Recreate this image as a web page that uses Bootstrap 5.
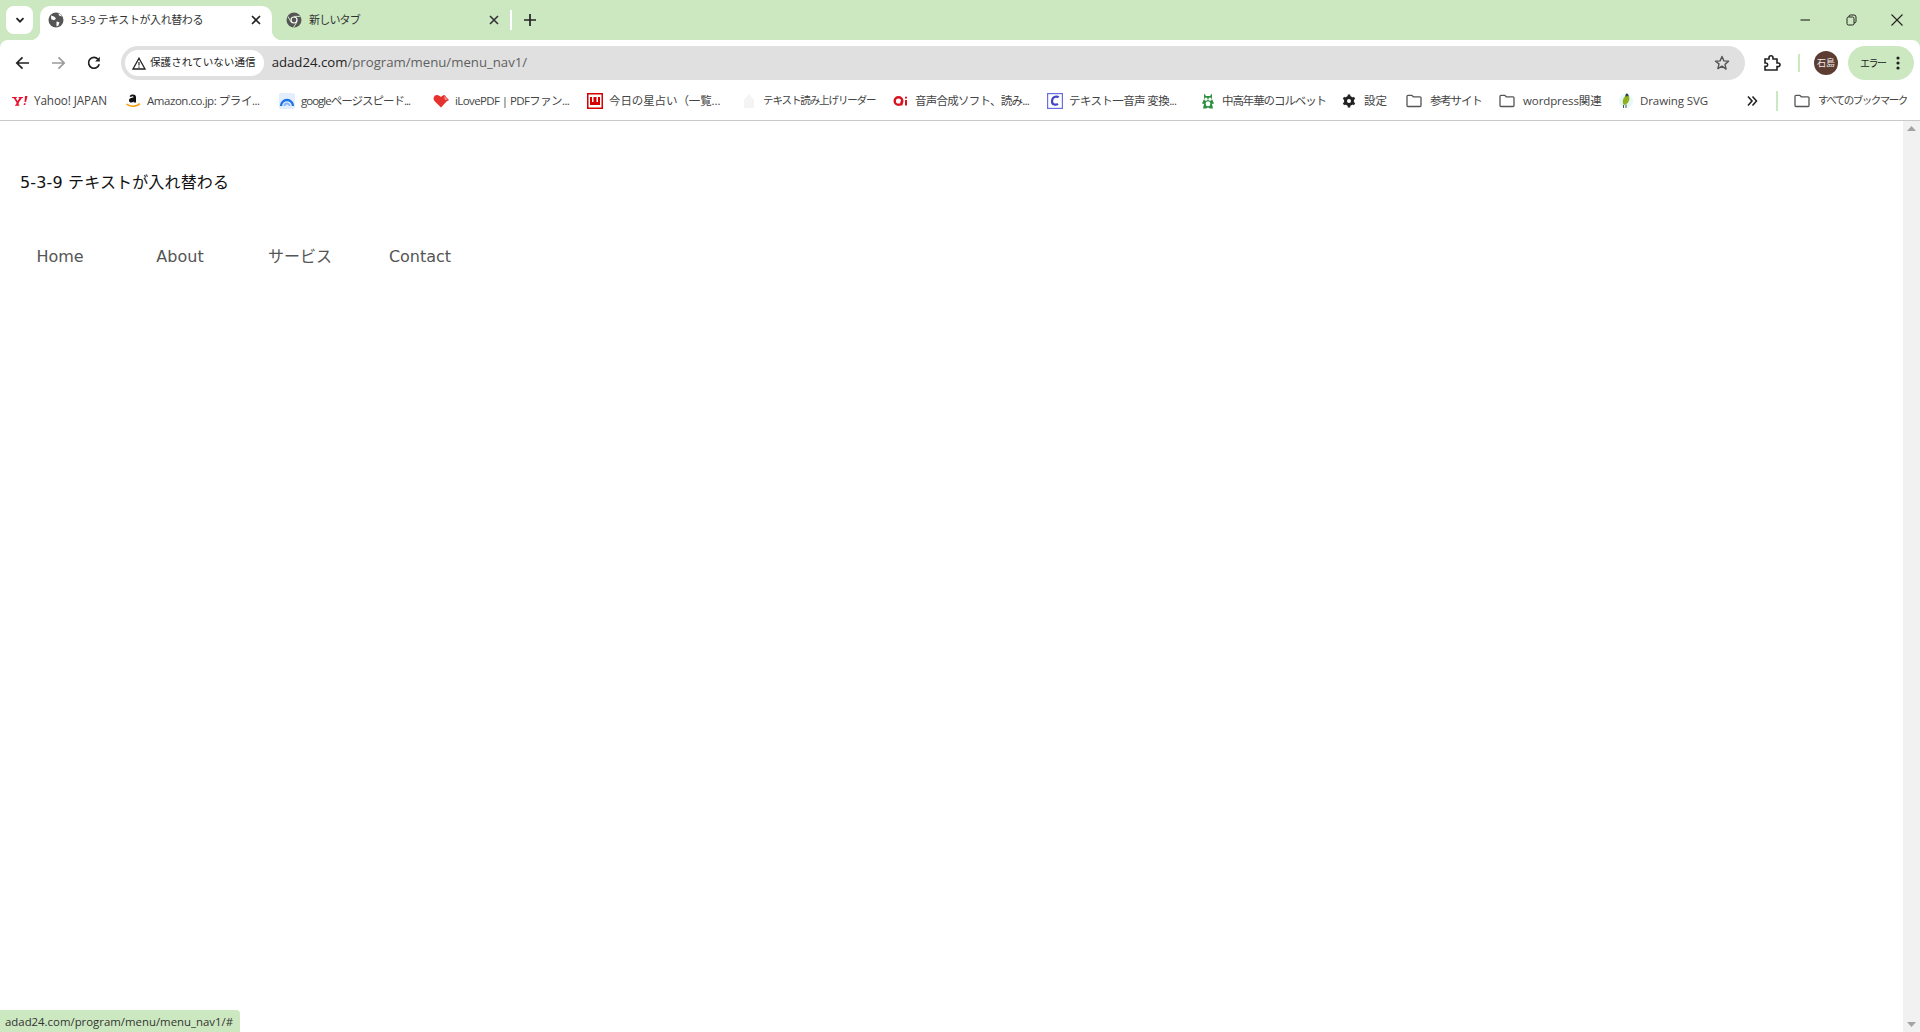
<!DOCTYPE html>
<html lang="ja">
<head>
<meta charset="utf-8">
<title>5-3-9 テキストが入れ替わる</title>
<link href="https://cdn.jsdelivr.net/npm/bootstrap@5.3.0/dist/css/bootstrap.min.css" rel="stylesheet">
<style>
:root{--chrome-green:#cce8c0;}
html,body{height:100%;overflow:hidden;}
body{font-family:"Open Sans","Noto Sans CJK JP",sans-serif;background:#fff;color:#222;}
svg{display:block;flex:none;}
.shell{height:1032px;}
.tabstrip{height:40px;background:var(--chrome-green);flex:none;}
.tab-menu{width:27px;height:28px;margin:6px 7px 0 6px;background:#fff;border-radius:8px;}
.tab-cell{height:34px;margin-top:6px;padding-bottom:6px!important;font-size:11px;color:#333;letter-spacing:-.8px;}
.tab-live{width:232px;background:#fff;border-radius:10px 10px 0 0;padding:0 10px 0 8px;position:relative;letter-spacing:-.4px;}
.tab-live::before,.tab-live::after{content:"";position:absolute;bottom:0;width:10px;height:10px;}
.tab-live::before{left:-10px;background:radial-gradient(circle at 0 0,transparent 10px,#fff 10.5px);}
.tab-live::after{right:-10px;background:radial-gradient(circle at 100% 0,transparent 10px,#fff 10.5px);}
.tab-idle{width:232px;padding:0 4px 0 14px;}
.tab-name{margin-left:7px;flex:1;white-space:nowrap;}
.tab-sep{width:2px;height:20px;background:#fff;margin:10px 0 0 6px;}
.tab-add{margin:13px 0 0 11px;}
.winbtns{margin-left:auto;gap:32px;padding:0 16px 0 0;height:40px;}
.toolbar{height:40px;flex:none;background:#fff;border-radius:8px 8px 0 0;padding:6px 0 0 15px;position:relative;}
.toolbar::before{content:"";position:absolute;inset:0 0 auto 0;height:8px;background:var(--chrome-green);z-index:0;}
.toolbar::after{content:"";position:absolute;inset:0;background:#fff;border-radius:8px 8px 0 0;z-index:0;}
.toolbar>*{position:relative;z-index:1;}
.nav-btns{gap:21px;width:106px;}
.omni{width:1624px;height:34px;background:#e0e0e0;border-radius:17px;padding:0 9px 0 4px;font-size:13.2px;}
.secure{height:26px;background:#fff;border-radius:13px;padding:0 8px 0 7px;font-size:10.6px;color:#222;gap:4px;}
.omni-url{margin-left:8px;color:#5f5f5f;}
.omni-url b{font-weight:400;color:#222;}
.omni-star{margin-left:auto;margin-right:6px;}
.tool-puzzle{margin-left:18px;}
.tool-sep{width:2px;height:18px;background:var(--chrome-green);margin-left:17px;}
.avatar{width:24px;height:24px;border-radius:50%;background:#5d3d32;color:#eee;font-size:9px;margin-left:14px;}
.err-pill{width:66px;height:34px;border-radius:17px;background:var(--chrome-green);font-size:10px;letter-spacing:-1.5px;margin-left:10px;padding:0 14px 0 12px;color:#222;}
.bookbar{height:41px;flex:none;border-bottom:1px solid #c9c9c9;padding:2px 0 0 12px;font-size:11.5px;color:#444;letter-spacing:-.1px;}
.mark-item{gap:6px;white-space:nowrap;overflow:hidden;flex:none;}
.mark-item:nth-child(1){width:113px}
.mark-item:nth-child(1) span{font-size:11.7px}
.mark-item:nth-child(2){width:154px}
.mark-item:nth-child(2) span{letter-spacing:-.45px}
.mark-item:nth-child(3){width:154px}
.mark-item:nth-child(3) span{letter-spacing:-1px}
.mark-item:nth-child(4){width:154px}
.mark-item:nth-child(4) span{letter-spacing:-.6px}
.mark-item:nth-child(5){width:154px}
.mark-item:nth-child(6){width:152px}
.mark-item:nth-child(6) span{font-size:10.5px;letter-spacing:-1.1px}
.mark-item:nth-child(7){width:154px}
.mark-item:nth-child(7) span{letter-spacing:-.75px}
.mark-item:nth-child(8){width:153px}
.mark-item:nth-child(8) span{letter-spacing:-.6px}
.mark-item:nth-child(9){width:142px}
.mark-item:nth-child(9) span{letter-spacing:-1.1px}
.mark-item:nth-child(10){width:64px;gap:8px}
.mark-item:nth-child(11){width:93px;gap:8px}
.mark-item:nth-child(11) span{letter-spacing:-1.2px}
.mark-item:nth-child(12){width:119px;gap:8px}
.mark-item:nth-child(13){width:128px}
.mark-item:last-child{gap:8px}
.mark-item:last-child span{font-size:10.5px;letter-spacing:-1.5px}
.more-item{width:30px;flex:none;}
.book-sep{width:2px;height:20px;background:var(--chrome-green);margin-right:16px;flex:none;}
.pagewrap{flex:1;min-height:0;position:relative;}
.pagemain{flex:1;font-family:"DejaVu Sans","Noto Sans CJK JP",sans-serif;padding-top:48px;}
.page-title{font-size:16px;font-weight:400;color:#111;margin:0 0 0 20px;line-height:27px;letter-spacing:.15px;}
.menu-row{margin:36px 0 0;padding:0;list-style:none;}
.menu-row a{display:block;width:120px;text-align:center;font-size:16px;line-height:50px;color:#555;text-decoration:none;}
.vbar{width:17px;background:#f1f1f1;flex:none;padding:5px 0;}
.statusbub{position:absolute;left:0;bottom:0;width:240px;height:22px;background:var(--chrome-green);border-top-right-radius:4px;font-size:11.4px;line-height:24px;padding-left:5px;color:#333;white-space:nowrap;}
</style>
</head>
<body>
<div class="shell d-flex flex-column">

  <div class="tabstrip d-flex">
    <div class="tab-menu d-flex align-items-center justify-content-center">
      <svg width="12" height="12" viewBox="0 0 12 12"><path d="M2.5 4.2 6 7.7l3.500-3.500" fill="none" stroke="#222" stroke-width="1.8"/></svg>
    </div>
    <div class="tab-cell tab-live d-flex align-items-center">
      <svg width="16" height="16" viewBox="0 0 16 16"><circle cx="8" cy="8" r="7.5" fill="#555"/><path d="M3 3.500l3.500 1.200 1.500 2-2 1.500-2.800-1zM8.500 9.500l3 .8-1 3.200-2 1zM10 1.500l1.500 2.300 2.500.7-1.500-2.200z" fill="#fff"/></svg>
      <span class="tab-name">5-3-9 テキストが入れ替わる</span>
      <svg width="12" height="12" viewBox="0 0 12 12"><path d="M2 2l8 8M10 2l-8 8" stroke="#222" stroke-width="1.6"/></svg>
    </div>
    <div class="tab-cell tab-idle d-flex align-items-center ms-0">
      <svg width="16" height="16" viewBox="0 0 16 16"><circle cx="8" cy="8" r="7.5" fill="#555"/><circle cx="8" cy="8" r="3.6" fill="#fff"/><circle cx="8" cy="8" r="2.4" fill="#555"/><path d="M8 4.400h6.500M5 10l-3-5.500M10.800 10.200 7.500 15.400" stroke="#cce8c0" stroke-width="1"/></svg>
      <span class="tab-name">新しいタブ</span>
      <svg width="12" height="12" viewBox="0 0 12 12"><path d="M2 2l8 8M10 2l-8 8" stroke="#333" stroke-width="1.6"/></svg>
    </div>
    <div class="tab-sep"></div>
    <svg class="tab-add" width="14" height="14" viewBox="0 0 14 14"><path d="M7 1v12M1 7h12" stroke="#222" stroke-width="1.7"/></svg>
    <div class="winbtns d-flex align-items-center">
      <svg width="14" height="14" viewBox="0 0 14 14"><path d="M2.500 7h9.500" stroke="#222" stroke-width="1.1"/></svg>
      <svg width="14" height="14" viewBox="0 0 14 14"><rect x="3" y="4" width="7" height="8" rx="1.5" fill="none" stroke="#222"/><path d="M5 4V3.300Q5 2 6.500 2H10q2 0 2 2v4.500q0 1.500-2 1.500" fill="none" stroke="#222"/></svg>
      <svg width="14" height="14" viewBox="0 0 14 14"><path d="M1.500 1.500l11 11M12.500 1.500l-11 11" stroke="#222" stroke-width="1.1"/></svg>
    </div>
  </div>

  <div class="toolbar d-flex align-items-center">
    <div class="nav-btns d-flex align-items-center">
      <svg width="15" height="14" viewBox="0 0 15 14"><path d="M14 7H2M7.500 1.300 1.800 7l5.700 5.700" fill="none" stroke="#222" stroke-width="1.7"/></svg>
      <svg width="15" height="14" viewBox="0 0 15 14"><path d="M1 7h12M7.500 1.300 13.200 7l-5.700 5.700" fill="none" stroke="#9a9a9a" stroke-width="1.7"/></svg>
      <svg width="14" height="14" viewBox="0 0 14 14"><path d="M12.200 8.200A5.400 5.400 0 1 1 11 3.200" fill="none" stroke="#222" stroke-width="1.7"/><path d="M12.800.8v4.700H8.100z" fill="#222"/></svg>
    </div>
    <div class="omni d-flex align-items-center">
      <div class="secure d-flex align-items-center">
        <svg width="14" height="13" viewBox="0 0 14 13"><path d="M7 1.200 13 12H1z" fill="none" stroke="#222" stroke-width="1.3"/><path d="M7 5v3.500M7 9.500v1.200" stroke="#222" stroke-width="1.2"/></svg>
        <span>保護されていない通信</span>
      </div>
      <span class="omni-url"><b>adad24.com</b>/program/menu/menu_nav1/</span>
      <svg class="omni-star" width="16" height="16" viewBox="0 0 16 16"><path d="M8 1.500l1.900 4.400 4.700.4-3.600 3.100 1.100 4.700L8 11.100l-4.100 2.500L5 8.900 1.400 6.300l4.700-.4z" fill="none" stroke="#555" stroke-width="1.4" stroke-linejoin="round"/></svg>
    </div>
    <svg class="tool-puzzle" width="18" height="18" viewBox="0 0 18 18"><path d="M2 5h4V3.800a2 2 0 0 1 4 0V5h4v4h1.200a1.800 1.800 0 0 1 0 3.600H14V16H2v-3.600h1a1.700 1.700 0 0 0 0-3.400H2z" fill="none" stroke="#222" stroke-width="1.6"/></svg>
    <div class="tool-sep"></div>
    <div class="avatar d-flex align-items-center justify-content-center">石島</div>
    <div class="err-pill d-flex align-items-center justify-content-between">
      <span>エラー</span>
      <svg width="4" height="14" viewBox="0 0 4 14"><circle cx="2" cy="2" r="1.6" fill="#222"/><circle cx="2" cy="7" r="1.6" fill="#222"/><circle cx="2" cy="12" r="1.6" fill="#222"/></svg>
    </div>
  </div>

  <div class="bookbar d-flex align-items-center">
    <div class="mark-item d-flex align-items-center"><svg width="16" height="12" viewBox="0 0 16 12"><path d="M0 2h5l-.3 1-1 .2L5.500 6l2-2.800-1-.2.200-1h4.300l-.2 1-1 .2L6.800 7.500l-.3 2 1 .2-.2 1H3l.2-1 1-.2.300-2L1.800 3.200 0 3z" fill="#e8112d"/><path d="M13 1h2.500L14 7h-1.500zM12 8.200h1.700l-.4 1.800h-1.700z" fill="#e8112d"/></svg><span>Yahoo! JAPAN</span></div>
    <div class="mark-item d-flex align-items-center"><svg width="16" height="16" viewBox="0 0 16 16"><path d="M4.500 3.200C5.500.8 11 .5 11 4v5.500h-2.200l-.2-1c-1.400 1.700-4.600 1.400-4.600-1 0-2.400 2.500-2.800 4.500-3 .2-1.600-2-1.600-2.500-.4z" fill="#111"/><path d="M1.500 11c3.500 2.800 9 3 12.500.3" fill="none" stroke="#f90" stroke-width="1.6"/><path d="M12.800 10.500l2.200-.2-.3 2.300z" fill="#f90"/></svg><span>Amazon.co.jp: プライ...</span></div>
    <div class="mark-item d-flex align-items-center"><svg width="16" height="16" viewBox="0 0 16 16"><rect width="16" height="16" rx="2" fill="#e3eefc"/><path d="M2 13a6 6 0 0 1 12 0" fill="none" stroke="#1a73e8" stroke-width="2.4"/><path d="M5.500 13a2.500 2.500 0 0 1 5 0" fill="none" stroke="#8ab4f8" stroke-width="1.8"/></svg><span>googleページスピード...</span></div>
    <div class="mark-item d-flex align-items-center"><svg width="16" height="14" viewBox="0 0 16 14"><path d="M8 13.500 1.500 7C-.5 4.500 1 1 4 1c1.700 0 3 1 4 2 .8-1 2-2 3.500-2L14 4l2 2-2.500 1.500z" fill="#e5322d"/><path d="M11 2l3.500 3.500L12 6z" fill="#f5a3a0"/></svg><span>iLovePDF | PDFファン...</span></div>
    <div class="mark-item d-flex align-items-center"><svg width="16" height="16" viewBox="0 0 16 16"><rect x=".75" y=".75" width="14.500" height="14.500" fill="#fff" stroke="#d60000" stroke-width="1.5"/><path d="M3 4h2v5h1.500V4h3v5H11V4h2v8H3z" fill="#d60000"/></svg><span>今日の星占い（一覧...</span></div>
    <div class="mark-item d-flex align-items-center"><svg width="16" height="16" viewBox="0 0 16 16"><path d="M8 1l5 6v8H3V7z" fill="#f4f4f4"/></svg><span>テキスト読み上げリーダー</span></div>
    <div class="mark-item d-flex align-items-center"><svg width="16" height="12" viewBox="0 0 16 12"><circle cx="5.500" cy="6" r="3.800" fill="none" stroke="#d8121f" stroke-width="2.4"/><path d="M8.500 6v4.500" stroke="#d8121f" stroke-width="2"/><path d="M13 5v5.500M13 1.800v1.700" stroke="#d8121f" stroke-width="2"/></svg><span>音声合成ソフト、読み...</span></div>
    <div class="mark-item d-flex align-items-center"><svg width="16" height="16" viewBox="0 0 16 16"><rect x=".6" y=".6" width="14.800" height="14.800" fill="#fff" stroke="#6a6fe0" stroke-width="1.2"/><path d="M11.500 4.500C10.500 3 5.500 3 5 8c-.3 4 4 4.300 6 2.800" fill="none" stroke="#3f46c8" stroke-width="2.2"/></svg><span>テキスト一音声 変換...</span></div>
    <div class="mark-item d-flex align-items-center"><svg width="16" height="16" viewBox="0 0 16 16"><path d="M4 .5l2 2.500h4l2-2.500v5.500L14 10.500 12 11 13 15.500H10L8 14.500 6 15.500H3L4 11 2 10.500 4 6z" fill="#2e9142"/><circle cx="6" cy="6.200" r="1.6" fill="#fff"/><circle cx="10" cy="6.200" r="1.6" fill="#fff"/><ellipse cx="8" cy="10.800" rx="2.4" ry="2.500" fill="#fff"/></svg><span>中高年華のコルベット</span></div>
    <div class="mark-item d-flex align-items-center"><svg width="14" height="14" viewBox="0 0 14 14"><circle cx="7" cy="7" r="5" fill="#222"/><path d="M7 .5v13M1.400 3.800l11.200 6.400M12.600 3.800 1.400 10.200" stroke="#222" stroke-width="2.6"/><circle cx="7" cy="7" r="2" fill="#fff"/></svg><span>設定</span></div>
    <div class="mark-item d-flex align-items-center"><svg width="16" height="14" viewBox="0 0 16 14"><path d="M1 2.300Q1 1.300 2 1.300h3.800l1.500 1.500H14q1 0 1 1v7.700q0 1-1 1H2q-1 0-1-1z" fill="none" stroke="#555" stroke-width="1.3"/></svg><span>参考サイト</span></div>
    <div class="mark-item d-flex align-items-center"><svg width="16" height="14" viewBox="0 0 16 14"><path d="M1 2.300Q1 1.300 2 1.300h3.800l1.500 1.500H14q1 0 1 1v7.700q0 1-1 1H2q-1 0-1-1z" fill="none" stroke="#555" stroke-width="1.3"/></svg><span>wordpress関連</span></div>
    <div class="mark-item d-flex align-items-center"><svg width="16" height="18" viewBox="0 0 16 18"><circle cx="8" cy="9" r="7" fill="#e6f7f7"/><path d="M8 1.500c2.500 0 3 2 2.500 4L7 5z" fill="#2a3f4a"/><path d="M7 4.500l4-.5c1 3 0 8-5 9 -2-2-1.500-6 1-8.500z" fill="#8fb11e"/><path d="M5.500 13v3M8 12.500v3.500" stroke="#555" stroke-width="1"/></svg><span>Drawing SVG</span></div>
    <div class="more-item d-flex align-items-center"><svg width="12" height="12" viewBox="0 0 12 12"><path d="M2 1.500 6 6l-4 4.500M6.500 1.500l4 4.500-4 4.500" fill="none" stroke="#222" stroke-width="1.6"/></svg></div>
    <div class="book-sep"></div>
    <div class="mark-item d-flex align-items-center"><svg width="16" height="14" viewBox="0 0 16 14"><path d="M1 2.300Q1 1.300 2 1.300h3.800l1.500 1.500H14q1 0 1 1v7.700q0 1-1 1H2q-1 0-1-1z" fill="none" stroke="#555" stroke-width="1.3"/></svg><span>すべてのブックマーク</span></div>
  </div>

  <div class="pagewrap d-flex">
    <main class="pagemain">
      <h1 class="page-title">5-3-9 テキストが入れ替わる</h1>
      <ul class="menu-row d-flex">
        <li><a href="#">Home</a></li>
        <li><a href="#">About</a></li>
        <li><a href="#">サービス</a></li>
        <li><a href="#">Contact</a></li>
      </ul>
    </main>
    <div class="vbar d-flex flex-column justify-content-between align-items-center">
      <svg width="9" height="5" viewBox="0 0 9 5"><path d="M4.500 0 9 5H0z" fill="#a3a3a3"/></svg>
      <svg width="9" height="5" viewBox="0 0 9 5"><path d="M0 0h9L4.500 5z" fill="#a3a3a3"/></svg>
    </div>
    <div class="statusbub">adad24.com/program/menu/menu_nav1/#</div>
  </div>
</div>
<script src="https://cdn.jsdelivr.net/npm/bootstrap@5.3.0/dist/js/bootstrap.bundle.min.js"></script>
</body>
</html>
